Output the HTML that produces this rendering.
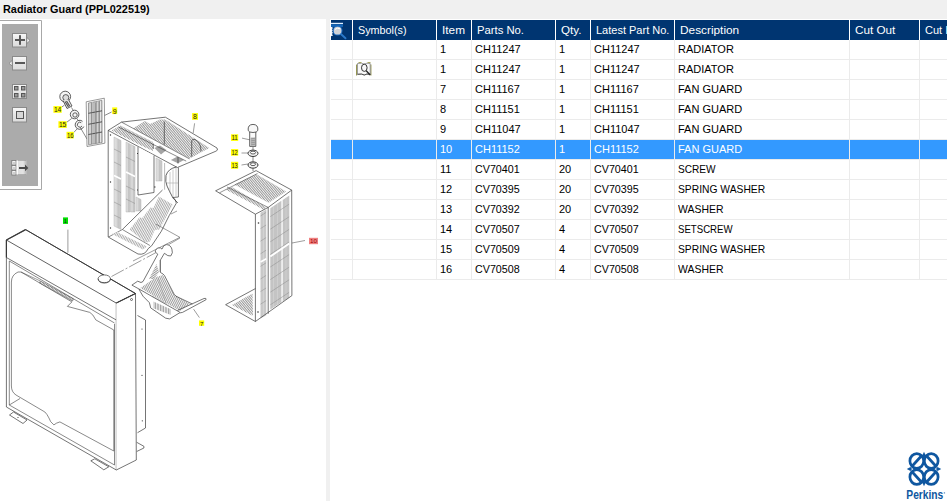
<!DOCTYPE html>
<html><head><meta charset="utf-8">
<style>
html,body{margin:0;padding:0;}
body{width:947px;height:501px;overflow:hidden;position:relative;background:#f0f0f0;font-family:"Liberation Sans",sans-serif;}
.title{position:absolute;left:3px;top:2px;font-size:11px;font-weight:bold;color:#000;line-height:14px;white-space:nowrap;transform:scaleX(0.987);transform-origin:0 0;}
.left{position:absolute;left:0;top:19px;width:326px;height:482px;background:#fff;}
.rightbg{position:absolute;left:330px;top:19px;width:617px;height:482px;background:#fff;}
.hc{position:absolute;top:20px;height:20px;background:#003571;}
.ht{position:absolute;top:20px;height:20px;line-height:20px;color:#fff;font-size:11px;white-space:nowrap;}
.dc{position:absolute;height:19px;background:#fff;border-bottom:1px solid #ebebeb;border-right:1px solid #ebebeb;}
.dc.sel{background:#3399ff;}
.dt{position:absolute;height:19px;line-height:19px;color:#000;font-size:11px;white-space:nowrap;}
.dt.selt{color:#fff;}
.vl{position:absolute;top:40px;width:1px;height:240px;background:#ececec;}
.sym{position:absolute;left:356px;width:16px;height:14px;}
</style></head><body>
<div class="title">Radiator Guard (PPL022519)</div>
<div class="left"></div>
<div class="rightbg"></div>
<div class="hc" style="left:331px;width:21px"></div>
<div class="hc" style="left:353px;width:83px"></div>
<div class="ht" style="left:358px;transform:scaleX(0.98);transform-origin:0 0">Symbol(s)</div>
<div class="hc" style="left:437px;width:34px"></div>
<div class="ht" style="left:442px;transform:scaleX(1.075);transform-origin:0 0">Item</div>
<div class="hc" style="left:472px;width:83px"></div>
<div class="ht" style="left:477px;transform:scaleX(1.025);transform-origin:0 0">Parts No.</div>
<div class="hc" style="left:556px;width:34px"></div>
<div class="ht" style="left:561px;transform:scaleX(1.058);transform-origin:0 0">Qty.</div>
<div class="hc" style="left:591px;width:83px"></div>
<div class="ht" style="left:596px">Latest Part No.</div>
<div class="hc" style="left:675px;width:174px"></div>
<div class="ht" style="left:680px;transform:scaleX(1.076);transform-origin:0 0">Description</div>
<div class="hc" style="left:850px;width:69px"></div>
<div class="ht" style="left:855px;transform:scaleX(1.065);transform-origin:0 0">Cut Out</div>
<div class="hc" style="left:920px;width:27px"></div>
<div class="ht" style="left:925px">Cut In</div>
<div class="dc" style="left:331px;top:40px;width:21px"></div>
<div class="dc" style="left:353px;top:40px;width:83px"></div>
<div class="dc" style="left:437px;top:40px;width:34px"></div>
<div class="dc" style="left:472px;top:40px;width:83px"></div>
<div class="dc" style="left:556px;top:40px;width:34px"></div>
<div class="dc" style="left:591px;top:40px;width:83px"></div>
<div class="dc" style="left:675px;top:40px;width:174px"></div>
<div class="dc" style="left:850px;top:40px;width:69px"></div>
<div class="dc" style="left:920px;top:40px;width:27px"></div>
<div class="dt" style="left:440px;top:40px">1</div>
<div class="dt" style="left:475px;top:40px">CH11247</div>
<div class="dt" style="left:559px;top:40px">1</div>
<div class="dt" style="left:594px;top:40px">CH11247</div>
<div class="dt" style="left:678px;top:40px">RADIATOR</div>
<div class="dc" style="left:331px;top:60px;width:21px"></div>
<div class="dc" style="left:353px;top:60px;width:83px"></div>
<div class="dc" style="left:437px;top:60px;width:34px"></div>
<div class="dc" style="left:472px;top:60px;width:83px"></div>
<div class="dc" style="left:556px;top:60px;width:34px"></div>
<div class="dc" style="left:591px;top:60px;width:83px"></div>
<div class="dc" style="left:675px;top:60px;width:174px"></div>
<div class="dc" style="left:850px;top:60px;width:69px"></div>
<div class="dc" style="left:920px;top:60px;width:27px"></div>
<div class="sym" style="top:62px"></div>
<div class="dt" style="left:440px;top:60px">1</div>
<div class="dt" style="left:475px;top:60px">CH11247</div>
<div class="dt" style="left:559px;top:60px">1</div>
<div class="dt" style="left:594px;top:60px">CH11247</div>
<div class="dt" style="left:678px;top:60px">RADIATOR</div>
<div class="dc" style="left:331px;top:80px;width:21px"></div>
<div class="dc" style="left:353px;top:80px;width:83px"></div>
<div class="dc" style="left:437px;top:80px;width:34px"></div>
<div class="dc" style="left:472px;top:80px;width:83px"></div>
<div class="dc" style="left:556px;top:80px;width:34px"></div>
<div class="dc" style="left:591px;top:80px;width:83px"></div>
<div class="dc" style="left:675px;top:80px;width:174px"></div>
<div class="dc" style="left:850px;top:80px;width:69px"></div>
<div class="dc" style="left:920px;top:80px;width:27px"></div>
<div class="dt" style="left:440px;top:80px">7</div>
<div class="dt" style="left:475px;top:80px">CH11167</div>
<div class="dt" style="left:559px;top:80px">1</div>
<div class="dt" style="left:594px;top:80px">CH11167</div>
<div class="dt" style="left:678px;top:80px">FAN GUARD</div>
<div class="dc" style="left:331px;top:100px;width:21px"></div>
<div class="dc" style="left:353px;top:100px;width:83px"></div>
<div class="dc" style="left:437px;top:100px;width:34px"></div>
<div class="dc" style="left:472px;top:100px;width:83px"></div>
<div class="dc" style="left:556px;top:100px;width:34px"></div>
<div class="dc" style="left:591px;top:100px;width:83px"></div>
<div class="dc" style="left:675px;top:100px;width:174px"></div>
<div class="dc" style="left:850px;top:100px;width:69px"></div>
<div class="dc" style="left:920px;top:100px;width:27px"></div>
<div class="dt" style="left:440px;top:100px">8</div>
<div class="dt" style="left:475px;top:100px">CH11151</div>
<div class="dt" style="left:559px;top:100px">1</div>
<div class="dt" style="left:594px;top:100px">CH11151</div>
<div class="dt" style="left:678px;top:100px">FAN GUARD</div>
<div class="dc" style="left:331px;top:120px;width:21px"></div>
<div class="dc" style="left:353px;top:120px;width:83px"></div>
<div class="dc" style="left:437px;top:120px;width:34px"></div>
<div class="dc" style="left:472px;top:120px;width:83px"></div>
<div class="dc" style="left:556px;top:120px;width:34px"></div>
<div class="dc" style="left:591px;top:120px;width:83px"></div>
<div class="dc" style="left:675px;top:120px;width:174px"></div>
<div class="dc" style="left:850px;top:120px;width:69px"></div>
<div class="dc" style="left:920px;top:120px;width:27px"></div>
<div class="dt" style="left:440px;top:120px">9</div>
<div class="dt" style="left:475px;top:120px">CH11047</div>
<div class="dt" style="left:559px;top:120px">1</div>
<div class="dt" style="left:594px;top:120px">CH11047</div>
<div class="dt" style="left:678px;top:120px">FAN GUARD</div>
<div class="dc sel" style="left:331px;top:140px;width:21px"></div>
<div class="dc sel" style="left:353px;top:140px;width:83px"></div>
<div class="dc sel" style="left:437px;top:140px;width:34px"></div>
<div class="dc sel" style="left:472px;top:140px;width:83px"></div>
<div class="dc sel" style="left:556px;top:140px;width:34px"></div>
<div class="dc sel" style="left:591px;top:140px;width:83px"></div>
<div class="dc sel" style="left:675px;top:140px;width:174px"></div>
<div class="dc sel" style="left:850px;top:140px;width:69px"></div>
<div class="dc sel" style="left:920px;top:140px;width:27px"></div>
<div class="dt selt" style="left:440px;top:140px">10</div>
<div class="dt selt" style="left:475px;top:140px">CH11152</div>
<div class="dt selt" style="left:559px;top:140px">1</div>
<div class="dt selt" style="left:594px;top:140px">CH11152</div>
<div class="dt selt" style="left:678px;top:140px">FAN GUARD</div>
<div class="dc" style="left:331px;top:160px;width:21px"></div>
<div class="dc" style="left:353px;top:160px;width:83px"></div>
<div class="dc" style="left:437px;top:160px;width:34px"></div>
<div class="dc" style="left:472px;top:160px;width:83px"></div>
<div class="dc" style="left:556px;top:160px;width:34px"></div>
<div class="dc" style="left:591px;top:160px;width:83px"></div>
<div class="dc" style="left:675px;top:160px;width:174px"></div>
<div class="dc" style="left:850px;top:160px;width:69px"></div>
<div class="dc" style="left:920px;top:160px;width:27px"></div>
<div class="dt" style="left:440px;top:160px">11</div>
<div class="dt" style="left:475px;top:160px;transform:scaleX(0.975);transform-origin:0 0">CV70401</div>
<div class="dt" style="left:559px;top:160px">20</div>
<div class="dt" style="left:594px;top:160px;transform:scaleX(0.975);transform-origin:0 0">CV70401</div>
<div class="dt" style="left:678px;top:160px;transform:scaleX(0.918);transform-origin:0 0">SCREW</div>
<div class="dc" style="left:331px;top:180px;width:21px"></div>
<div class="dc" style="left:353px;top:180px;width:83px"></div>
<div class="dc" style="left:437px;top:180px;width:34px"></div>
<div class="dc" style="left:472px;top:180px;width:83px"></div>
<div class="dc" style="left:556px;top:180px;width:34px"></div>
<div class="dc" style="left:591px;top:180px;width:83px"></div>
<div class="dc" style="left:675px;top:180px;width:174px"></div>
<div class="dc" style="left:850px;top:180px;width:69px"></div>
<div class="dc" style="left:920px;top:180px;width:27px"></div>
<div class="dt" style="left:440px;top:180px">12</div>
<div class="dt" style="left:475px;top:180px;transform:scaleX(0.975);transform-origin:0 0">CV70395</div>
<div class="dt" style="left:559px;top:180px">20</div>
<div class="dt" style="left:594px;top:180px;transform:scaleX(0.975);transform-origin:0 0">CV70395</div>
<div class="dt" style="left:678px;top:180px;transform:scaleX(0.936);transform-origin:0 0">SPRING WASHER</div>
<div class="dc" style="left:331px;top:200px;width:21px"></div>
<div class="dc" style="left:353px;top:200px;width:83px"></div>
<div class="dc" style="left:437px;top:200px;width:34px"></div>
<div class="dc" style="left:472px;top:200px;width:83px"></div>
<div class="dc" style="left:556px;top:200px;width:34px"></div>
<div class="dc" style="left:591px;top:200px;width:83px"></div>
<div class="dc" style="left:675px;top:200px;width:174px"></div>
<div class="dc" style="left:850px;top:200px;width:69px"></div>
<div class="dc" style="left:920px;top:200px;width:27px"></div>
<div class="dt" style="left:440px;top:200px">13</div>
<div class="dt" style="left:475px;top:200px;transform:scaleX(0.975);transform-origin:0 0">CV70392</div>
<div class="dt" style="left:559px;top:200px">20</div>
<div class="dt" style="left:594px;top:200px;transform:scaleX(0.975);transform-origin:0 0">CV70392</div>
<div class="dt" style="left:678px;top:200px;transform:scaleX(0.949);transform-origin:0 0">WASHER</div>
<div class="dc" style="left:331px;top:220px;width:21px"></div>
<div class="dc" style="left:353px;top:220px;width:83px"></div>
<div class="dc" style="left:437px;top:220px;width:34px"></div>
<div class="dc" style="left:472px;top:220px;width:83px"></div>
<div class="dc" style="left:556px;top:220px;width:34px"></div>
<div class="dc" style="left:591px;top:220px;width:83px"></div>
<div class="dc" style="left:675px;top:220px;width:174px"></div>
<div class="dc" style="left:850px;top:220px;width:69px"></div>
<div class="dc" style="left:920px;top:220px;width:27px"></div>
<div class="dt" style="left:440px;top:220px">14</div>
<div class="dt" style="left:475px;top:220px;transform:scaleX(0.975);transform-origin:0 0">CV70507</div>
<div class="dt" style="left:559px;top:220px">4</div>
<div class="dt" style="left:594px;top:220px;transform:scaleX(0.975);transform-origin:0 0">CV70507</div>
<div class="dt" style="left:678px;top:220px;transform:scaleX(0.875);transform-origin:0 0">SETSCREW</div>
<div class="dc" style="left:331px;top:240px;width:21px"></div>
<div class="dc" style="left:353px;top:240px;width:83px"></div>
<div class="dc" style="left:437px;top:240px;width:34px"></div>
<div class="dc" style="left:472px;top:240px;width:83px"></div>
<div class="dc" style="left:556px;top:240px;width:34px"></div>
<div class="dc" style="left:591px;top:240px;width:83px"></div>
<div class="dc" style="left:675px;top:240px;width:174px"></div>
<div class="dc" style="left:850px;top:240px;width:69px"></div>
<div class="dc" style="left:920px;top:240px;width:27px"></div>
<div class="dt" style="left:440px;top:240px">15</div>
<div class="dt" style="left:475px;top:240px;transform:scaleX(0.975);transform-origin:0 0">CV70509</div>
<div class="dt" style="left:559px;top:240px">4</div>
<div class="dt" style="left:594px;top:240px;transform:scaleX(0.975);transform-origin:0 0">CV70509</div>
<div class="dt" style="left:678px;top:240px;transform:scaleX(0.936);transform-origin:0 0">SPRING WASHER</div>
<div class="dc" style="left:331px;top:260px;width:21px"></div>
<div class="dc" style="left:353px;top:260px;width:83px"></div>
<div class="dc" style="left:437px;top:260px;width:34px"></div>
<div class="dc" style="left:472px;top:260px;width:83px"></div>
<div class="dc" style="left:556px;top:260px;width:34px"></div>
<div class="dc" style="left:591px;top:260px;width:83px"></div>
<div class="dc" style="left:675px;top:260px;width:174px"></div>
<div class="dc" style="left:850px;top:260px;width:69px"></div>
<div class="dc" style="left:920px;top:260px;width:27px"></div>
<div class="dt" style="left:440px;top:260px">16</div>
<div class="dt" style="left:475px;top:260px;transform:scaleX(0.975);transform-origin:0 0">CV70508</div>
<div class="dt" style="left:559px;top:260px">4</div>
<div class="dt" style="left:594px;top:260px;transform:scaleX(0.975);transform-origin:0 0">CV70508</div>
<div class="dt" style="left:678px;top:260px;transform:scaleX(0.949);transform-origin:0 0">WASHER</div>
<svg style="position:absolute;left:0;top:0" width="947" height="501" viewBox="0 0 947 501">
<defs>
<pattern id="hd" patternUnits="userSpaceOnUse" width="1.8" height="2" patternTransform="rotate(-40)"><rect width="1.8" height="2" fill="#f4f4f4"/><rect width="0.8" height="2" fill="#8c8c8c"/></pattern>
<pattern id="hd2" patternUnits="userSpaceOnUse" width="1.8" height="2" patternTransform="rotate(55)"><rect width="1.8" height="2" fill="#f4f4f4"/><rect width="0.8" height="2" fill="#8c8c8c"/></pattern>
<pattern id="hv" patternUnits="userSpaceOnUse" width="1.6" height="3"><rect width="1.6" height="3" fill="#f2f2f2"/><rect width="0.7" height="3" fill="#909090"/></pattern>
<pattern id="hv2" patternUnits="userSpaceOnUse" width="2" height="3" patternTransform="skewY(-30)"><rect width="2" height="3" fill="#fff"/><rect width="0.9" height="3" fill="#a0a0a0"/></pattern>
<pattern id="hd3" patternUnits="userSpaceOnUse" width="2" height="2" patternTransform="rotate(-30)"><rect width="2" height="2" fill="#f6f6f6"/><rect width="0.8" height="2" fill="#9a9a9a"/></pattern>
<linearGradient id="sg" x1="0" y1="0" x2="1" y2="0"><stop offset="0" stop-color="#e2e2e2"/><stop offset="0.45" stop-color="#d6d6d6"/><stop offset="0.55" stop-color="#c4c4c4"/><stop offset="1" stop-color="#cdcdcd"/></linearGradient>
<pattern id="hv7" patternUnits="userSpaceOnUse" width="1.7" height="3" patternTransform="rotate(-25)"><rect width="1.7" height="3" fill="#f4f4f4"/><rect width="0.7" height="3" fill="#8c8c8c"/></pattern>
</defs>
<!-- toolbar frame -->
<path d="M0 20.5H41.5V189.5H0" fill="none" stroke="#a8a8a8" stroke-width="1"/>
<rect x="2" y="24" width="36" height="162" fill="#ababab"/>
<defs>
<linearGradient id="ig" x1="0" y1="0" x2="0" y2="1"><stop offset="0" stop-color="#f8f8f8"/><stop offset="0.5" stop-color="#e6e6e6"/><stop offset="1" stop-color="#dcdcdc"/></linearGradient>
</defs>
<!-- plus -->
<rect x="12.5" y="33.5" width="14" height="13.5" fill="url(#ig)" stroke="#8a8a8a" stroke-width="1"/>
<path d="M26.8 37.5L30 40.5L26.8 43.5Z" fill="#f2f2f2" stroke="#7a7a7a" stroke-width="0.7"/>
<rect x="15" y="39" width="10" height="2" fill="#585858"/><rect x="19" y="35.2" width="2" height="9.6" fill="#585858"/>
<!-- minus -->
<rect x="12.5" y="56.5" width="14" height="13.5" fill="url(#ig)" stroke="#8a8a8a" stroke-width="1"/>
<path d="M12.2 60.5L9 63.3L12.2 66Z" fill="#f2f2f2" stroke="#7a7a7a" stroke-width="0.7"/>
<rect x="15" y="62" width="10" height="2" fill="#585858"/>
<!-- grid -->
<rect x="12.5" y="84.5" width="14" height="14" fill="url(#ig)" stroke="#8a8a8a" stroke-width="1"/>
<g fill="#9a9a9a" stroke="#555" stroke-width="1"><rect x="14.5" y="86.5" width="3.5" height="3.5"/><rect x="21.5" y="86.5" width="3.5" height="3.5"/><rect x="14.5" y="93.5" width="3.5" height="3.5"/><rect x="21.5" y="93.5" width="3.5" height="3.5"/></g>
<!-- square -->
<rect x="12.5" y="107.5" width="14" height="14.5" fill="url(#ig)" stroke="#8a8a8a" stroke-width="1"/>
<rect x="16.5" y="111.5" width="7" height="7" fill="#d8d8d8" stroke="#555" stroke-width="1"/>
<!-- export -->
<g stroke="#777" stroke-width="0.8" fill="#f4f4f4"><rect x="11.8" y="160.5" width="4.2" height="4.5"/><rect x="11.8" y="165.5" width="4.2" height="4.5"/><rect x="11.8" y="170.5" width="4.2" height="4.5"/></g><g fill="#cfcfcf"><rect x="13" y="162" width="2" height="2"/><rect x="13" y="167" width="2" height="2"/><rect x="13" y="172" width="2" height="2"/></g>
<linearGradient id="eg" x1="0" y1="0" x2="1" y2="0"><stop offset="0" stop-color="#dcdcdc"/><stop offset="0.6" stop-color="#e4e4e4"/><stop offset="1" stop-color="#ababab"/></linearGradient><rect x="16.5" y="160.5" width="11" height="14" fill="url(#eg)"/><path d="M16.5 160.5H26M16.5 174.5H26" stroke="#8a8a8a" stroke-width="0.6" opacity="0.6"/>
<rect x="16.6" y="160.5" width="1.4" height="14" fill="#fafafa"/>
<rect x="19" y="167" width="6.5" height="2" fill="#4a4a4a"/>
<path d="M25 164.5L28.3 168L25 171.2Z" fill="#4a4a4a"/>

<!-- ===== small parts ===== -->
<g fill="none" stroke="#3a3a3a" stroke-width="0.8">
<!-- bolt 14 -->
<circle cx="65.2" cy="96.6" r="5.4" fill="#f4f4f4"/>
<circle cx="65.8" cy="97.6" r="3" fill="#ddd"/>
<path d="M63 100.5L67 108.5L72 106L68.5 99.5" fill="#e8e8e8"/>
<path d="M65 101.5L68.5 107M66.5 101L69.8 106.3" stroke="#555" stroke-width="1.2"/>
<!-- washer 15 -->
<circle cx="74.6" cy="114.5" r="4.3" fill="#f6f6f6"/>
<circle cx="75" cy="115" r="2.2"/>
<!-- washer 16 -->
<path d="M82.5 121.3A4.5 4.5 0 1 0 83.8 126.6" fill="#f6f6f6"/>
<path d="M81.2 122.6A2.5 2.5 0 1 0 82 126"/>
<!-- centerline -->
<path d="M71.5 107.5L73.3 110.5M77 118.5L78 120.5M80.2 127.3L87 139" stroke-width="0.6"/>
<!-- leaders -->
<path d="M61.5 107.3L64.5 105M66.8 122.2L71.8 118.4M73.8 132.5L77.4 128.5M104.5 115.5L111.6 112" stroke-width="0.6"/>
<!-- part 9 -->
<path d="M86.2 101.8L104.3 98.2L104.9 143.2L87 146.5Z" fill="#fff" stroke="#555" stroke-width="0.6"/>
<path d="M88.4 103L102 100.3L102.2 142.4L88.6 144.8Z" fill="url(#hv)" stroke="#777" stroke-width="0.6"/>
<path d="M88.4 113.3L102 110.8M88.4 124.3L102 121.8M88.4 134.5L102 132" stroke="#444" stroke-width="0.9"/>
<path d="M92 103L92 144M95.5 102.3L95.5 143.6M99 101.6L99 143" stroke="#777" stroke-width="0.7"/>
<!-- bolt 11 -->
<path d="M249.7 132L249.7 146.4L255.8 146.4L255.8 132" fill="#fafafa"/>
<path d="M248.2 130.5Q247.5 124.5 253 124.4Q258.5 124.5 257.8 130.5Q257 132.5 253 132.5Q249 132.5 248.2 130.5Z" fill="#f8f8f8"/>
<rect x="250.6" y="137.5" width="4.4" height="8.4" fill="#b8b8b8" stroke="none"/>
<path d="M250.5 139L255 138.2M250.5 141L255 140.2M250.5 143L255 142.2M250.5 145L255 144.2" stroke="#777" stroke-width="0.5"/>
<!-- washers 12 13 -->
<ellipse cx="253" cy="153.3" rx="5" ry="3.2" fill="#f2f2f2" stroke-width="1"/>
<ellipse cx="253" cy="152.6" rx="2.6" ry="1.4" fill="#fff"/>
<ellipse cx="253" cy="165" rx="5" ry="3.2" fill="#f2f2f2" stroke-width="1"/>
<ellipse cx="253" cy="164.2" rx="2.6" ry="1.4" fill="#fff"/>
<path d="M253 147L253 150M253 156.5L253 161.5M253 168.2L253 171" stroke-width="0.6"/>
<path d="M242 138.1L249.7 139.8M241.5 153L248 153M241.5 165L248 164" stroke-width="0.5"/>
</g>

<!-- ===== part 8 ===== -->
<g fill="none" stroke="#3a3a3a" stroke-width="0.7" stroke-linejoin="round">
<!-- hatched regions top -->
<path d="M111.5 130.5L120.5 125.5L153 142L153 151L140 145Z" fill="url(#hd)" stroke="none"/>
<path d="M133 128.3L145 121L150 124L160 119.5L165.4 119.4L209.3 148L189.5 158.4Z" fill="url(#hd)" stroke="none"/>
<path d="M154.4 148L160 145.6L166.5 150L161 154.4Z" fill="#a4a4a4" stroke="none"/>
<path d="M170.9 160L177 156.7L184 160L178 163.3Z" fill="#a4a4a4" stroke="none"/>
<!-- outline top -->
<path d="M108.2 130.4L121.5 122.1L165.4 117.2L217 148Q218.5 150.5 215.9 151.2L177.4 167.5Z" fill="none"/>
<path d="M121.5 122.1L189.5 158.9M118.5 127L186.2 161.1" stroke-width="0.6"/>
<path d="M164.3 121.6L164.3 144.6M153.3 143.5L153.3 149M178 157L178 163.5M191.7 156.7L191.7 141Q192 138.5 195 139.5Q201 142 201 151.2" stroke-width="0.7"/>
<path d="M194.6 123.3L193.2 133" stroke-width="0.5"/>
<!-- side face -->
<path d="M108.2 130.4L108.2 237L138 254Q145 255.5 148.1 248.7L151.7 245.7L161.3 231.3L169.1 215.7L176.3 203.2Q176 199 172.7 197.2" /><path d="M178.4 167.5L178.4 197L173 197.5" stroke-width="0.7"/>
<path d="M114 137L121 140.5L121 229.5L114 226Z" fill="url(#sg)" stroke="#aaa" stroke-width="0.4"/>
<path d="M114 175.5L121 179" stroke="#fff" stroke-width="1.6"/>
<path d="M114 149L121 152.5M114 162L121 165.5M114 189L121 192.5M114 202L121 205.5M114 215L121 218.5" stroke="#888" stroke-width="0.5"/>
<path d="M126 142L130.3 144.2L130.3 212L126 212Z" fill="url(#sg)" stroke="#aaa" stroke-width="0.4"/>
<path d="M130.8 144.5L135 146.6L135 212L130.8 212Z" fill="url(#sg)" stroke="#aaa" stroke-width="0.4"/>
<path d="M126 172L135 176.5" stroke="#fff" stroke-width="1.6"/>
<path d="M126 157L135 161.5M126 186L135 190.5M126 199L135 203.5" stroke="#888" stroke-width="0.5"/>
<path d="M136 197L141 199.5L141 211L136 211Z" fill="url(#sg)" stroke="#aaa" stroke-width="0.4"/>
<circle cx="110.5" cy="135" r="0.7" fill="#333" stroke="none"/>
<circle cx="110.5" cy="182" r="0.7" fill="#333" stroke="none"/>
<circle cx="110.5" cy="228" r="0.7" fill="#333" stroke="none"/>
<path d="M138 147L138 195L154 192.5L154 155.5" fill="#fff"/><path d="M137 153.5L138 153.5M137 190L138 190M154 187L155.5 187" stroke-width="1"/>
<path d="M156 158L162 161L162 181L156 181Z" fill="url(#sg)" stroke="#aaa" stroke-width="0.4"/>
<path d="M176.6 167Q168.2 168.5 166 175.4L165.8 181.3Q166.5 186 169.4 191L173 198.1L177.8 202.9" stroke-width="0.8"/><path d="M164.6 163L164.6 189.7" stroke="#777" stroke-width="0.5"/>
<path d="M170 172L170 193M173 169.5L173 197M176 168L176 197M167 183L178 183" stroke="#aaa" stroke-width="0.6"/>
<!-- flap -->
<path d="M122.4 229.5L162.5 190" stroke-width="0.7"/>
<path d="M108.5 237L122.4 229.5L149.9 245.5" stroke-width="0.6"/>
<path d="M129.6 229.5L139.2 217.5L142.2 218.1L150.5 207.4L153.5 208L158.9 196.6L172.7 204.4L159.5 229.5L154.7 230.1L149.9 241.5L145.7 242.7Z" fill="url(#hd3)" stroke="none"/>
<path d="M112 234L117 232L147 246.5L143 249.5Z" fill="url(#hd3)" stroke="none"/>
<path d="M155.9 224.1L179.9 237.3L133 261" stroke-width="0.5"/>
<path d="M171 214L177 211" stroke-width="0.5"/>
</g>

<!-- ===== part 10 ===== -->
<g fill="none" stroke="#3a3a3a" stroke-width="0.7" stroke-linejoin="round">
<path d="M234.4 184.6L256.1 174.1L286.1 191.5L268.7 202.7Z" fill="url(#hd)" stroke="none"/>
<path d="M225.4 189.4L232.3 187.3L265.9 206.9L263.8 209.7Z" fill="url(#hd)" stroke="none"/>
<path d="M215.6 190.8L256.1 170.6L291.7 190.1L268.2 207.4L255.4 214.2Z" />
<path d="M219.5 192.8L257.5 173.5M227 187L268.2 207.4" stroke-width="0.55"/>
<!-- front face -->
<path d="M270.3 208.2L281.4 200.8L281.4 302.2L270.3 309.5Z" fill="#c4c4c4" stroke="none"/>
<path d="M282.7 199.9L289.3 195.5L289.3 297.4L282.7 301.4Z" fill="#c4c4c4" stroke="none"/>
<path d="M273.5 206L273.5 307.5M277.5 203.5L277.5 305M286 197.5L286 299.5" stroke="#d6d6d6" stroke-width="0.6"/>
<path d="M270.3 216.6L289.1 204.2M270.3 229.2L289.1 216.8M270.3 241.8L289.1 229.4M270.3 254.4L289.1 242.0M270.3 267.0L289.1 254.6M270.3 279.6L289.1 267.2M270.3 292.2L289.1 279.8M270.3 304.8L289.1 292.4" stroke="#8a8a8a" stroke-width="0.5"/>
<path d="M270.3 256.5L289.3 243.6" stroke="#fff" stroke-width="1.8"/>
<!-- left narrow face -->
<path d="M260.5 212.8L266.3 209.6L266.3 315.2L260.5 318.5Z" fill="#c8c8c8" stroke="none"/>
<path d="M263.4 211L263.4 317" stroke="#dcdcdc" stroke-width="0.6"/>
<path d="M260.5 216.0L266.1 212.4M260.5 228.6L266.1 225.0M260.5 241.2L266.1 237.6M260.5 253.8L266.1 250.2M260.5 266.4L266.1 262.8M260.5 279.0L266.1 275.4M260.5 291.6L266.1 288.0M260.5 304.2L266.1 300.6" stroke="#8a8a8a" stroke-width="0.5"/>
<path d="M260.5 262L266.3 258.7" stroke="#fff" stroke-width="1.6"/>
<path d="M255.4 214.2L255.4 321.5L291.9 295.6L291.7 190.1M268.2 207.4L268.2 313.8" />
<!-- bottom flange -->
<path d="M255.4 288.6L225.6 304.7L255.4 321.5" />
<path d="M232 305L252.5 293.5L253 316Z" fill="url(#hd)" stroke="none"/>
<circle cx="258.5" cy="223" r="0.8" fill="#333" stroke="none"/>
<circle cx="258" cy="312" r="0.8" fill="#333" stroke="none"/>
<path d="M292 243L305 240.5" stroke-width="0.5"/>
</g>

<!-- ===== part 1 radiator ===== -->
<g fill="none" stroke="#3a3a3a" stroke-width="0.7" stroke-linejoin="round">
<!-- back plate -->
<path d="M137.5 315.5L145.5 320L145.5 428L137.5 432.7" fill="#fff"/>
<path d="M136.7 442.3L143.9 446.3L143.9 448L136.7 451.5" />
<circle cx="142" cy="329" r="0.6" fill="#333" stroke="none"/>
<circle cx="142" cy="375.3" r="0.6" fill="#333" stroke="none"/><circle cx="142.3" cy="420.8" r="0.6" fill="#333" stroke="none"/>
<!-- top tank -->
<path d="M6.4 240L25.6 229.6L135.5 293.5L116.3 303.1Z" fill="#fff" stroke-width="0.8"/>
<path d="M6.4 240L25.6 229.6" stroke-width="1.3"/>
<path d="M25.6 229.6L135.5 293.5" stroke-width="1"/>
<path d="M6.4 240L6.4 257.5" stroke-width="1.2"/>
<path d="M6.4 257.5L116.3 320" />
<path d="M6.4 240L6.4 407L116.3 470L116.3 303.1" />
<path d="M116.3 303.1L135.5 293.5L136.3 460L116.3 470" fill="#fff"/>
<path d="M116.3 303.1L135.5 293.5" stroke-width="1.1"/>

<circle cx="131.5" cy="299.5" r="1" />
<!-- filler cap -->
<ellipse cx="104.3" cy="278.8" rx="6.2" ry="3.9" fill="#fff"/>
<path d="M98.1 278.8Q98.5 283 104.3 283Q110 283 110.5 278.8" />
<!-- inner frame -->
<path d="M9.3 261L9.3 405L114.5 465L114.5 324M9.3 405L20 398.5" stroke-width="0.6"/>
<path d="M9.3 261L114.5 323" stroke-width="0.6"/>

<!-- core -->
<path d="M11.4 386L11.4 282Q11.4 275 18 272L21 272L71.9 301.9L67.4 306.4L89.8 312.4Q93 314 95.8 319.9L113.8 330L113.8 451L59.9 421.9Q56 423 53.9 424.9Q50 422 48.9 417.9Q47 414 44.9 412L16 395Q11.4 392 11.4 386Z" stroke-width="0.6"/>
<path d="M40.4 281L73.4 298.9L72.5 301L39.5 283Z" fill="url(#hd)" stroke-width="0.5"/>
<path d="M21 272L40.4 281" stroke-width="0.5"/>
<!-- feet -->
<path d="M9.5 415L13.5 412L27 420L23 423.5Z" fill="#fff"/><circle cx="18" cy="417.5" r="0.6" fill="#333" stroke="none"/>
<path d="M90.8 460.8L94.8 458.8L108.8 466.8L103.8 469.8Z" fill="#fff"/>
<!-- centerline cap to part7 -->
<path d="M111.5 276.5L157 252" stroke-width="0.5" stroke-dasharray="14 2 2 2"/>
<path d="M67.9 229.6L67.9 252.7" stroke-width="0.5"/>
</g>

<!-- ===== part 7 ===== -->
<g fill="none" stroke="#3a3a3a" stroke-width="0.7" stroke-linejoin="round">
<path d="M143 281.5L157.8 254.2Q154.3 252 155.4 250.6Q157 246.8 160.5 247.9L162 249.1Q163 245.2 166.2 244.6Q170.5 244.6 171.9 249.1Q173.4 253 170.7 256Q168 256.5 164.4 253.3L160.5 259.9L160.5 272.5L163 274L164.4 275.4L174.1 294.2L176 296.2L192.3 304L205.9 299.8L182.5 312.4L179.3 313L169.6 318.9L165.7 318.2L150.7 307.9L149.4 302.7L143 296.2L140.3 291.6L139 289L131.9 285.1L137.7 281.2L141 282.5Z" fill="#fff" stroke="none"/>
<path d="M140.3 288L156 277L163 275L174 294.5L190 304L180 311L166 303Z" fill="url(#hv7)" stroke="none"/>
<path d="M149 279L156.5 264L159 272L154 279Z" fill="url(#hd2)" stroke="none"/>
<path d="M153.3 301.4L170.9 309.2L170.9 315L153.3 308.2Z" fill="url(#hv)" stroke="none"/>
<path d="M152 296L166.5 303.5M158 278L166 303" stroke="#999" stroke-width="0.5"/>
<!-- neck -->
<path d="M143 281.5L157.8 254.2Q154.3 252 155.4 250.6Q157 246.8 160.5 247.9L162 249.1Q163 245.2 166.2 244.6Q170.5 244.6 171.9 249.1Q173.4 253 170.7 256Q168 256.5 164.4 253.3L160.5 259.9L160.5 272.5L163 274L164.4 275.4L174.1 294.2L176 296.2L192.3 304"/>
<path d="M159.6 260L159.6 272" stroke="#aaa" stroke-width="0.6"/>
<!-- flange and trough -->
<path d="M143 281.5L141 282.5L137.7 281.2L131.9 285.1L139 289L140.3 291.6L143 296.2L149.4 302.7L150.7 307.9L165.7 318.2L169.6 318.9L179.3 313L182.5 312.4L205.9 299.8Q207 298 204 298.5L177.4 310.5"/>
<path d="M139 289L180 312.4" />
<path d="M168.6 244.6L180 238" stroke-width="0.5"/>
<path d="M193.6 309.2L199.4 317.6" stroke-width="0.5"/>
</g>
<!-- labels -->
<g fill="#ffff00">
<rect x="53.4" y="106.1" width="8.3" height="6.7"/>
<rect x="58.4" y="121.2" width="8.4" height="6.7"/>
<rect x="66.5" y="131.8" width="7.3" height="6.7"/>
<rect x="112.2" y="107.4" width="5" height="6.7"/>
<rect x="192.1" y="113.1" width="5.9" height="6.7"/>
<rect x="231" y="134.3" width="7.2" height="6.6"/>
<rect x="231" y="149.1" width="7.2" height="6.6"/>
<rect x="231" y="161.8" width="7.2" height="7"/>
<rect x="199" y="320.4" width="5.2" height="5.4"/>
</g>
<rect x="63" y="217.4" width="5" height="6.5" fill="#00e000"/>
<rect x="309" y="237.8" width="9" height="6.4" fill="#f08080"/>
<g font-family="Liberation Sans" font-size="7" fill="#222" text-anchor="middle">
<text x="57.6" y="112.3" textLength="7.4" lengthAdjust="spacingAndGlyphs">14</text><text x="62.6" y="127.4" textLength="7.4" lengthAdjust="spacingAndGlyphs">15</text><text x="70.2" y="138" textLength="6.6" lengthAdjust="spacingAndGlyphs">16</text>
<text x="114.7" y="113.6">9</text><text x="195" y="119.3">8</text>
<text x="234.6" y="140.4" textLength="6.4" lengthAdjust="spacingAndGlyphs">11</text><text x="234.6" y="155.2" textLength="6.4" lengthAdjust="spacingAndGlyphs">12</text><text x="234.6" y="168.1" textLength="6.4" lengthAdjust="spacingAndGlyphs">13</text>
<text x="201.6" y="325.5" font-size="6">7</text>
<text x="65.5" y="223" font-size="5">1</text><text x="313.5" y="243.3" font-size="5.5" fill="#900" textLength="7" lengthAdjust="spacingAndGlyphs">10</text>
</g>
</svg>

<svg style="position:absolute;left:0;top:0" width="947" height="501" viewBox="0 0 947 501">
<!-- header icon -->
<g>
<rect x="331" y="22.8" width="12" height="1.3" fill="#dfefff"/>
<rect x="331" y="24.3" width="12" height="2.6" fill="#1466b8"/>
<path d="M331 27L333.2 28L331 29.2L333.2 30.4L331 31.6L333.2 32.8L331 34L333.2 35.2L331 36.2Z" fill="#f4f8ff"/>
<rect x="331" y="27" width="1.2" height="9" fill="#f4f8ff"/>
<circle cx="337.6" cy="30.7" r="4.9" fill="#1e6cc0"/>
<circle cx="337.6" cy="30.7" r="3.9" fill="#cfd3d8"/>
<path d="M335 29.4Q337.3 27.3 340.2 28.8" stroke="#fff" stroke-width="1" fill="none"/>
<path d="M341.2 34.2L345.5 38.3" stroke="#2a78c8" stroke-width="1.9" stroke-linecap="round"/>
</g>
<!-- symbol icon row 2 -->
<g>
<path d="M356.6 64.5V75.5M370.9 64.5V75.5" fill="none" stroke="#8a8a40" stroke-width="1"/>
<path d="M357.5 63.5L357.5 74.3Q362 73.5 364.3 75Q366.5 73.5 370.2 74.3L370.2 63.5Q366.5 62.8 364.3 64Q362 62.8 357.5 63.5Z" fill="#f8f8f8" stroke="#777" stroke-width="0.7"/><path d="M357.5 74.3Q362 73.5 364.3 75Q366.5 73.5 370.2 74.3" fill="none" stroke="#444" stroke-width="0.9"/>
<path d="M358.5 62.5H361.5M367.5 62.5H370.5" stroke="#a8a860" stroke-width="1"/>
<ellipse cx="364.3" cy="67.8" rx="2.8" ry="3.6" fill="none" stroke="#333" stroke-width="1"/>
<path d="M366.2 70.8L370.2 75" stroke="#222" stroke-width="1.3"/>
</g>
<!-- perkins logo -->
<g fill="none" stroke="#0f57a0" stroke-width="2.7">
<ellipse cx="916.8" cy="461" rx="6.9" ry="7.4"/>
<ellipse cx="931.2" cy="461" rx="6.9" ry="7.4"/>
<ellipse cx="916.8" cy="477" rx="6.9" ry="7.4"/>
<ellipse cx="931.2" cy="477" rx="6.9" ry="7.4"/>
<path d="M911.8 466.5L921.8 455.5M926.2 455.5L936.2 466.5M911.8 471.5L921.8 482.5M926.2 482.5L936.2 471.5"/>
</g>
<g fill="#0f57a0">
<path d="M924 451.8L926 456L924 458L922 456Z"/>
<path d="M924 486.2L926 482L924 480L922 482Z"/>
<path d="M906.8 469L910.5 467L912 469L910.5 471Z"/>
<path d="M941.2 469L937.5 467L936 469L937.5 471Z"/>
</g>
<text x="906.3" y="499" font-family="Liberation Sans" font-weight="bold" font-size="12.2" fill="#0f57a0" textLength="37" lengthAdjust="spacingAndGlyphs">Perkins</text><circle cx="944.4" cy="492.9" r="0.8" fill="#7aa0cc"/>
</svg>

</body></html>
